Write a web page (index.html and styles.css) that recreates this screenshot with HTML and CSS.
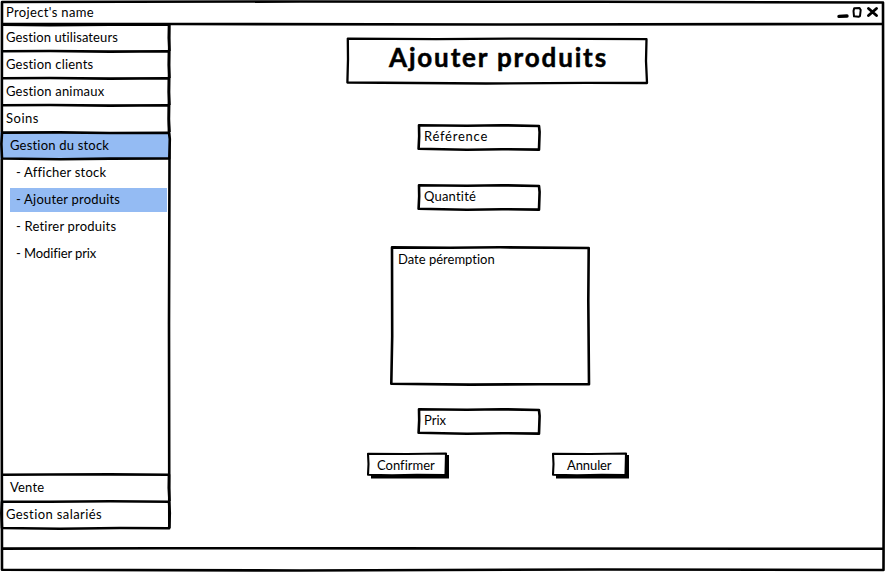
FILE: index.html
```
<!DOCTYPE html>
<html lang="fr">
<head>
<meta charset="utf-8">
<title>Project's name</title>
<link rel="stylesheet" href="styles.css">
</head>
<body>
<div class="window">
  <svg class="frame" viewBox="0 0 885 572"><path class="line" d="M2 2L300 1.5L600 1.8L883 2.5L883.3 180L884 400L883.5 570L600 569.5L300 570.5L2 569.8L1.6 300Z"/></svg>
  <header class="titlebar">
    <svg class="frame" viewBox="0 0 885 24"><path class="line" d="M2 24L170 24L500 24.5L883 24"/></svg>
    <span class="t-name">Project's name</span>
    <svg class="controls" viewBox="0 0 44 16"><path class="minimize" d="M2 12.4L10 12"/><path class="maximize" d="M17.2 4.2L22.5 4L23.7 6L23 12L21.5 12.8L17 12.3L16.5 7Z"/><path class="close" d="M31.5 4.5L39.5 11.5M39.5 4.5L31.5 11.5"/></svg>
  </header>
  <div class="body">
    <nav class="sidebar">
      <svg class="frame" viewBox="0 0 170 504"><path class="line" d="M169.3 1L168.8 100L169.5 136L169 300L169.3 504"/></svg>
      <div class="item"><svg class="frame" viewBox="0 0 170 27"><path class="line" d="M2 .8L50 1.2L110 .6L169 .8L168.8 14L169.5 27"/></svg><span class="t-users">Gestion utilisateurs</span></div>
      <div class="item"><svg class="frame" viewBox="0 0 170 27"><path class="line" d="M2 .2L50 0L110 .6L169 .2L168.8 14L169.5 27"/></svg><span class="t-clients">Gestion clients</span></div>
      <div class="item"><svg class="frame" viewBox="0 0 170 27"><path class="line" d="M2 .2L50 0L110 .6L169 .2L168.8 14L169.5 27"/></svg><span class="t-animals">Gestion animaux</span></div>
      <div class="item"><svg class="frame" viewBox="0 0 170 27"><path class="line" d="M2 .2L50 0L110 .6L169 .2L168.8 14L169.5 27"/></svg><span class="t-care">Soins</span></div>
      <div class="item indented active"><svg class="frame" viewBox="0 0 170 27"><path class="line" d="M2 .6L60 .4L110 1L169 .8L169.8 7L169.3 26.5L110 26.6L60 27.2L2 26.5L1.4 12Z"/></svg><span class="t-stock">Gestion du stock</span></div>
      <ul class="submenu">
        <li><span class="t-show">- Afficher stock</span></li>
        <li class="active"><span class="t-add">- Ajouter produits</span></li>
        <li><span class="t-remove">- Retirer produits</span></li>
        <li><span class="t-price">- Modifier prix</span></li>
      </ul>
      <div class="item indented"><svg class="frame" viewBox="0 0 170 27"><path class="line" d="M2 .8L50 .5L110 .4L169 .8L168.8 14L169.5 27"/></svg><span class="t-sale">Vente</span></div>
      <div class="item"><svg class="frame" viewBox="0 0 170 27"><path class="line" d="M2 .7L50 .8L110 .3L169 .7L169.8 12L169.2 27.2L120 27L60 27.7L2 27L1.4 12Z"/></svg><span class="t-staff">Gestion salariés</span></div>
    </nav>
    <main class="main">
      <h1 class="heading"><svg class="frame" viewBox="0 0 302 48"><path class="line heading-line" d="M1.8 1.6L90 2.2L180 1.6L300.5 2.2L300 24L301 46L240 45.8L140 46.5L1.4 45.5L2 22Z"/></svg><span class="t-heading">Ajouter produits</span></h1>
      <div class="field reference"><svg class="frame" viewBox="0 0 124 27"><path class="line" d="M2 1.3L50 1.8L85 1.2L122 2L122.6 8L122 25.6L85 25.2L50 25.8L1.6 24.8L2.2 12Z"/></svg><span class="t-ref">Référence</span></div>
      <div class="field quantity"><svg class="frame" viewBox="0 0 124 27"><path class="line" d="M2 1.3L50 1.8L85 1.2L122 2L122.6 8L122 25.6L85 25.2L50 25.8L1.6 24.8L2.2 12Z"/></svg><span class="t-qty">Quantité</span></div>
      <div class="field expiry"><svg class="frame" viewBox="0 0 200 140"><path class="line" d="M2 1.4L60 1.8L110 1.3L198.7 2L198.3 55L199 138.3L150 138.2L80 138.6L1.3 137.8L2.2 90Z"/></svg><span class="t-date">Date péremption</span></div>
      <div class="field price"><svg class="frame" viewBox="0 0 124 27"><path class="line" d="M2 1.3L50 1.8L85 1.2L122 2L122.6 8L122 25.6L85 25.2L50 25.8L1.6 24.8L2.2 12Z"/></svg><span class="t-prix">Prix</span></div>
      <div class="actions">
        <button class="button confirm" type="button"><svg class="frame" viewBox="0 0 82 27"><path class="shadow" d="M4 23H78V3H82V26.5H4Z"/><path class="line thin" d="M1 1.7L40 2L79 1.5L78.5 23L50 22.8L25 23.4L1 22.8L1.5 12Z"/></svg><span class="t-ok">Confirmer</span></button>
        <button class="button cancel" type="button"><svg class="frame" viewBox="0 0 77 27"><path class="shadow" d="M4 23H73V3H77V26.5H4Z"/><path class="line thin" d="M1 1.7L38 2L74 1.5L73.5 23L50 22.8L25 23.4L1 22.8L1.5 12Z"/></svg><span class="t-cancel">Annuler</span></button>
      </div>
    </main>
  </div>
  <footer class="statusbar"><svg class="frame" viewBox="0 0 885 24"><path class="line" d="M2 .6L160 .2L400 .4L883 .8"/></svg></footer>
</div>
</body>
</html>
```
FILE: styles.css
```
* { box-sizing: border-box; }
body { margin: 0; background: #fff; color: #000; font: 13px/18px Lato, "Noto Sans", sans-serif; font-variant-ligatures: none; overflow: hidden; }
.window { position: relative; display: flex; flex-direction: column; width: 885px; height: 572px; background: #fff; }
.frame { position: absolute; inset: 0; width: 100%; height: 100%; overflow: visible; pointer-events: none; }
.line { fill: none; stroke: #000; stroke-width: 2.6; stroke-linejoin: round; }
.line.heading-line { stroke-width: 2.3; }
.line.thin { fill: #fff; stroke-width: 2.1; }
.shadow { fill: #000; }
span { position: relative; display: inline-block; white-space: nowrap; }
.titlebar { position: relative; display: flex; justify-content: space-between; height: 24px; padding: 3px 4px 0 6px; }
.controls { width: 44px; height: 16px; margin-top: 1px; fill: none; stroke: #000; }
.minimize { stroke-width: 3.4; stroke-linecap: round; }
.maximize { stroke-width: 2; stroke-linejoin: round; }
.close { stroke-width: 2.9; stroke-linecap: round; }
.body { display: flex; height: 524px; }
.sidebar { position: relative; display: flex; flex-direction: column; width: 170px; height: 504px; }
.item { position: relative; height: 27px; flex: none; padding: 4px 0 0 6px; }
.indented { padding-left: 10px; }
.active { background: #94bbf3; }
.submenu { flex: 1; margin: 0; padding: 2px 3px 0 10px; list-style: none; }
.submenu li { height: 24px; margin-bottom: 3px; padding: 2px 0 0 6px; }
.main { flex: 1; padding-top: 13px; }
.heading { position: relative; width: 302px; height: 48px; margin: 0 0 39px 176px; padding: 4px 0 0 43px; font: bold 26px/32px Lato, "Noto Sans", sans-serif; }
.field { position: relative; width: 124px; height: 27px; margin-left: 247px; padding: 3px 0 0 7px; }
.reference { margin-bottom: 33px; }
.quantity { margin-bottom: 35px; }
.expiry { width: 200px; height: 140px; margin: 0 0 22px 220px; padding: 4px 0 0 8px; }
.actions { display: flex; gap: 103px; margin: 17px 0 0 197px; }
.button { position: relative; height: 27px; padding: 0; border: 0; background: none; color: inherit; font: inherit; text-align: left; }
.confirm { width: 82px; padding: 0 0 2px 10px; }
.cancel { width: 77px; padding: 0 0 2px 15px; }
.statusbar { position: relative; height: 24px; }
.t-heading { letter-spacing: 1.85px; -webkit-text-stroke: .5px #000; }
.t-name { letter-spacing: .35px; }
.t-users { letter-spacing: .1px; }
.t-clients, .t-animals, .t-stock, .t-show, .t-add, .t-remove { letter-spacing: .2px; }
.t-care { letter-spacing: .5px; }
.t-price { letter-spacing: -.1px; }
.t-sale { letter-spacing: .2px; }
.t-staff { letter-spacing: .4px; }
.t-ref { letter-spacing: .75px; }
.t-qty { letter-spacing: .2px; }
.t-cancel { letter-spacing: -.1px; }
```
